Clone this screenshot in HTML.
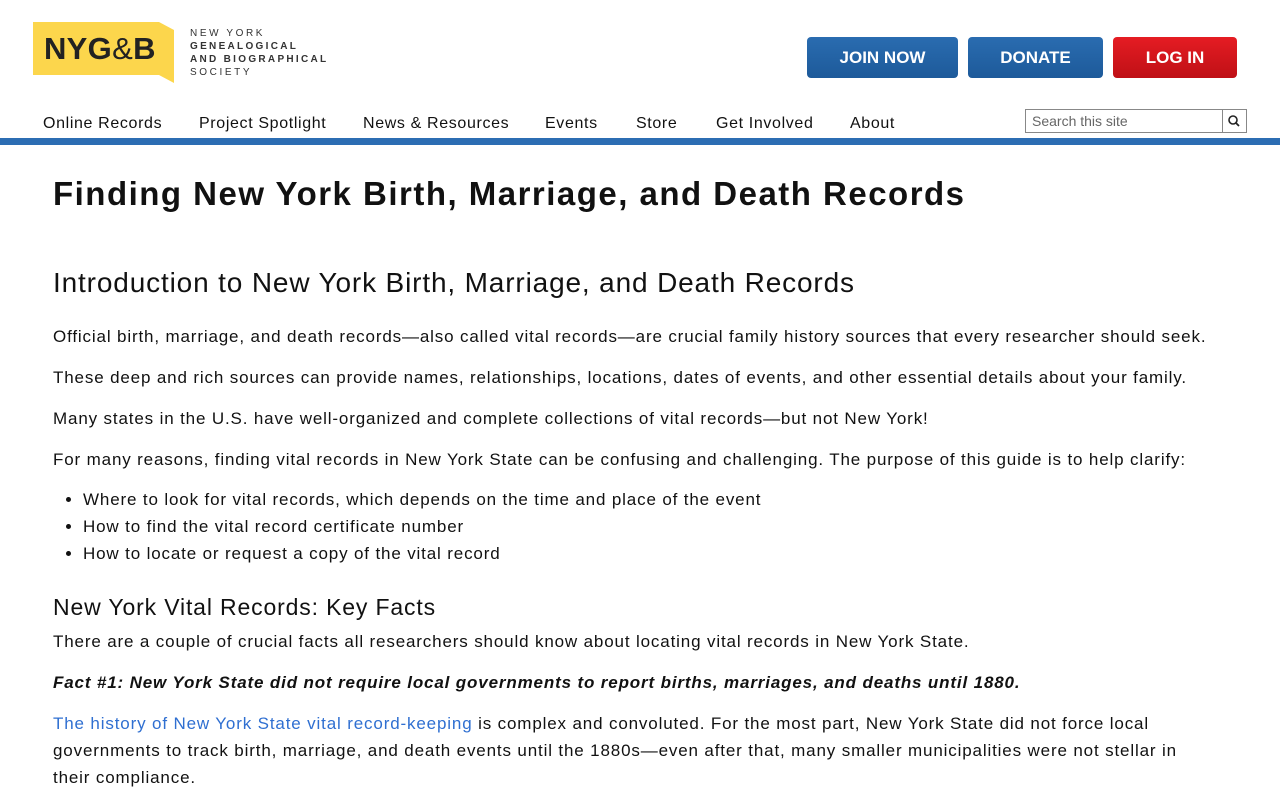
<!DOCTYPE html>
<html><head><meta charset="utf-8"><style>
*{box-sizing:border-box;margin:0;padding:0}
body{width:1280px;height:800px;overflow:hidden;background:#fff;font-family:"Liberation Sans",Arial,sans-serif;color:#111}
.logo{position:absolute;left:33px;top:22px;width:141px;height:61px}
.logo .y{position:absolute;left:0;top:0;width:141px;height:61px;background:#fcd64c;clip-path:polygon(0 0,126px 0,141px 8px,141px 61px,126px 53px,0 53px)}
.logo .t{position:absolute;left:11px;top:9px;font-size:31px;font-weight:bold;color:#222;letter-spacing:0.3px}
.logo .t span{font-weight:normal}
.sub{position:absolute;left:190px;top:27px;font-size:10px;letter-spacing:2.6px;line-height:13px;color:#333}
.sub b{letter-spacing:2.3px}
.btn{position:absolute;top:37px;height:41px;border-radius:4px;color:#fff;font-weight:bold;font-size:17px;text-align:center;line-height:41px}
.blue{background:linear-gradient(#2a6cb0,#1d5a9a)}
.red{background:linear-gradient(#e51c23,#bf1016)}
.nav{position:absolute;top:115px;font-size:16px;letter-spacing:0.04em;white-space:nowrap}
.search{position:absolute;left:1025px;top:109px;width:222px;height:24px;border:1px solid #888;font-size:14px;color:#666;padding:3px 6px}
.search i{position:absolute;right:0;top:0;width:24px;height:22px;border-left:1px solid #888}
.bar{position:absolute;top:138px;left:0;width:1280px;height:7px;background:#2c6db3}
.c{position:absolute;left:53px;top:174px;width:1190px;font-size:17px;line-height:27px;letter-spacing:0.05em}
h1{font-size:33px;font-weight:bold;line-height:40px;margin-bottom:52px;letter-spacing:0.045em}
h2{font-size:28px;font-weight:normal;line-height:34px;margin-bottom:23px}
h3{font-size:23px;font-weight:normal;line-height:30px;margin-top:25px;margin-bottom:6px}
p{margin-bottom:14px}
ul{margin:-1px 0 0 30px}
a{color:#2f6fd1;text-decoration:none}
</style></head><body>
<div class="logo"><div class="y"></div><div class="t">NYG<span>&amp;</span>B</div></div>
<div class="sub">NEW YORK<br><b>GENEALOGICAL</b><br><b>AND BIOGRAPHICAL</b><br>SOCIETY</div>
<div class="btn blue" style="left:807px;width:151px">JOIN NOW</div>
<div class="btn blue" style="left:968px;width:135px">DONATE</div>
<div class="btn red" style="left:1113px;width:124px">LOG IN</div>
<span class="nav" style="left:43px">Online Records</span>
<span class="nav" style="left:199px">Project Spotlight</span>
<span class="nav" style="left:363px">News &amp; Resources</span>
<span class="nav" style="left:545px">Events</span>
<span class="nav" style="left:636px">Store</span>
<span class="nav" style="left:716px">Get Involved</span>
<span class="nav" style="left:850px">About</span>
<div class="search">Search this site<i><svg width="22" height="22" viewBox="0 0 22 22"><circle cx="10" cy="10" r="4" fill="none" stroke="#222" stroke-width="1.6"/><path d="M13 13l3 3" stroke="#222" stroke-width="1.8"/></svg></i></div>
<div class="bar"></div>
<div class="c">
<h1>Finding New York Birth, Marriage, and Death Records</h1>
<h2>Introduction to New York Birth, Marriage, and Death Records</h2>
<p>Official birth, marriage, and death records—also called vital records—are crucial family history sources that every researcher should seek.</p>
<p>These deep and rich sources can provide names, relationships, locations, dates of events, and other essential details about your family.</p>
<p>Many states in the U.S. have well-organized and complete collections of vital records—but not New York!</p>
<p>For many reasons, finding vital records in New York State can be confusing and challenging. The purpose of this guide is to help clarify:</p>
<ul><li>Where to look for vital records, which depends on the time and place of the event</li><li>How to find the vital record certificate number</li><li>How to locate or request a copy of the vital record</li></ul>
<h3>New York Vital Records: Key Facts</h3>
<p>There are a couple of crucial facts all researchers should know about locating vital records in New York State.</p>
<p><b><i>Fact #1: New York State did not require local governments to report births, marriages, and deaths until 1880.</i></b></p>
<p style="width:1160px"><a>The history of New York State vital record-keeping</a> is complex and convoluted. For the most part, New York State did not force local governments to track birth, marriage, and death events until the 1880s—even after that, many smaller municipalities were not stellar in their compliance.</p>
</div>
</body></html>
